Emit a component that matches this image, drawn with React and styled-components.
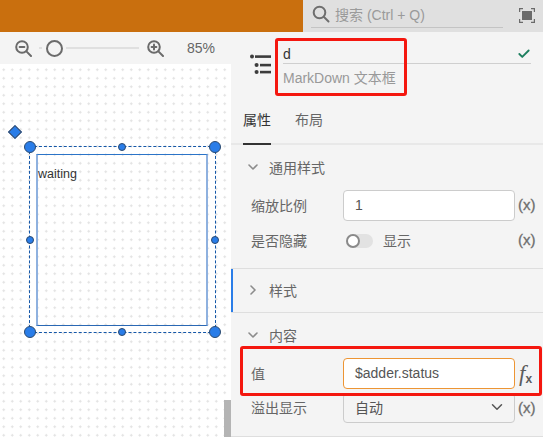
import React from 'react';
import styled, { createGlobalStyle } from 'styled-components';
import { Check, ChevronDown, ChevronRight } from 'lucide-react';

const GlobalStyle = createGlobalStyle`
  html, body {
    margin: 0;
    padding: 0;
    height: 100%;
    overflow: hidden;
    background: #f4f4f4;
    font-family: "Liberation Sans", "Noto Sans CJK SC", sans-serif;
  }
  * {
    box-sizing: border-box;
  }
`;

const Page = styled.div`
  position: relative;
  width: 543px;
  height: 437px;
  overflow: hidden;
  display: flex;
  flex-direction: column;
`;

const TopBar = styled.div`
  height: 32px;
  display: flex;
  flex: none;
`;

const Brand = styled.div`
  width: 303px;
  background: #c96f0e;
`;

const SearchArea = styled.div`
  flex: 1;
  background: #e0e0e0;
  display: flex;
  align-items: flex-start;
  padding-left: 8px;
`;

const SearchBox = styled.div`
  width: 192px;
  height: 28px;
  border-bottom: 1px solid #c4c4c4;
  display: flex;
  align-items: center;
  gap: 5px;
  padding-left: 1px;
  padding-top: 1px;
  color: #9a9a9a;
  font-size: 14px;
`;

const FullScreen = styled.svg`
  margin: 8px 0 0 16px;
`;

const Body = styled.div`
  flex: 1;
  display: flex;
  min-height: 0;
`;

const LeftPane = styled.div`
  width: 231px;
  display: flex;
  flex-direction: column;
`;

const ZoomBar = styled.div`
  height: 32px;
  flex: none;
  background: #f4f4f4;
  display: flex;
  align-items: center;
  padding-left: 15px;
`;

const TrackStart = styled.div`
  width: 3px;
  height: 2px;
  margin-left: 7px;
  background: #e0e0e0;
`;

const Knob = styled.div`
  width: 17px;
  height: 17px;
  margin-left: 4px;
  border-radius: 50%;
  border: 2px solid #6b6b6b;
  background: #f4f4f4;
`;

const Track = styled.div`
  width: 73px;
  height: 2px;
  margin: 0 8px 0 3px;
  background: #e0e0e0;
`;

const ZoomValue = styled.span`
  margin-left: 23px;
  font-size: 14px;
  color: #666;
`;

const Canvas = styled.div`
  position: relative;
  flex: 1;
  background-color: #fff;
  background-image: radial-gradient(circle at center, #e2e2e2 0, #e2e2e2 1px, transparent 1.3px);
  background-size: 8.5px 8.5px;
  background-position: -0.5px 1.5px;
`;

const Diamond = styled.div`
  position: absolute;
  left: 10px;
  top: 63px;
  width: 10px;
  height: 10px;
  transform: rotate(45deg);
  background: #2a7de8;
  border: 1px solid #3a4b63;
`;

const Selection = styled.div`
  position: absolute;
  left: 29px;
  top: 82px;
  width: 187px;
  height: 187px;
  border: 1px dashed #1457a8;
`;

const Node = styled.div`
  position: absolute;
  left: 36px;
  top: 90px;
  width: 172px;
  height: 172px;
  border-style: solid;
  border-color: #2b74c8 #8fb1df #2a68b4 #8fb1df;
  border-width: 1px 2px 1px 2px;
  padding: 7px 0 0 0;
  font-size: 12.5px;
  line-height: 24px;
  color: #333;
`;

const Handle = styled.div`
  position: absolute;
  left: ${p => p.$x - p.$r}px;
  top: ${p => p.$y - p.$r}px;
  width: ${p => p.$r * 2}px;
  height: ${p => p.$r * 2}px;
  border-radius: 50%;
  background: #2a7de8;
  border: 1px solid #2b4a70;
`;

const ScrollThumb = styled.div`
  position: absolute;
  right: 0;
  bottom: 0;
  width: 7px;
  height: 37px;
  background: #b4b4b4;
`;

const Panel = styled.div`
  flex: 1;
  background: #f4f4f4;
  display: flex;
  flex-direction: column;
  min-width: 0;
`;

const PanelHead = styled.div`
  height: 68px;
  flex: none;
  display: flex;
  padding: 20px 12px 0 19px;
`;

const TypeIcon = styled.svg`
  flex: none;
  margin-right: 11px;
`;

const HeadFields = styled.div`
  flex: 1;
  margin-top: -7px;
`;

const NameField = styled.div`
  height: 19px;
  border-bottom: 1px solid #cfcfcf;
  display: flex;
  align-items: center;
  justify-content: space-between;
  font-size: 14px;
  color: #333;
`;

const TypeName = styled.div`
  margin-top: 4px;
  font-size: 14px;
  line-height: 20px;
  color: #999;
`;

const Tabs = styled.div`
  height: 45px;
  flex: none;
  display: flex;
  gap: 24px;
  padding-left: 12px;
  border-bottom: 2px solid #e8e8e8;
`;

const Tab = styled.div`
  height: 45px;
  line-height: 41px;
  font-size: 14px;
  color: ${p => (p.$active ? '#333' : '#666')};
  border-bottom: 2px solid ${p => (p.$active ? '#333' : 'transparent')};
`;

const Section = styled.section`
  flex: none;
  padding-bottom: ${p => p.$pad}px;
  border-bottom: 1px solid #dedede;
  box-shadow: ${p => (p.$marked ? 'inset 2px 0 0 #2a7de8' : 'none')};
`;

const SectionHead = styled.div`
  height: ${p => (p.$open ? 45 : 43)}px;
  display: flex;
  align-items: center;
  gap: 8px;
  padding: 0 0 2px 14px;
  font-size: 14px;
  color: #666;
  svg {
    color: #8c8c8c;
  }
`;

const Rows = styled.div`
  display: flex;
  flex-direction: column;
  gap: 4px;
`;

const Row = styled.div`
  display: grid;
  grid-template-columns: 92px 172px auto;
  height: ${p => p.$h || 31}px;
  align-items: center;
  padding-left: 20px;
  font-size: 14px;
  color: #666;
`;

const Label = styled.span`
  padding-bottom: 2px;
`;

const Field = styled.div`
  height: 100%;
  display: flex;
  align-items: center;
  justify-content: space-between;
  padding: 0 8px 2px 11px;
  background: ${p => (p.$plain ? 'transparent' : '#fff')};
  border: 1px solid ${p => (p.$focus ? '#ed9534' : '#cccccc')};
  border-radius: 4px;
  color: #555;
`;

const Toggle = styled.div`
  display: flex;
  align-items: center;
  gap: 10px;
  padding-left: 3px;
`;

const SwitchTrack = styled.div`
  width: 27px;
  height: 14px;
  border-radius: 7px;
  background: #e2e2e2;
  display: flex;
  align-items: center;
`;

const SwitchThumb = styled.div`
  width: 14px;
  height: 14px;
  border-radius: 50%;
  background: #fff;
  border: 2px solid #8a8a8a;
`;

const Binding = styled.span`
  margin-left: 3px;
  padding-bottom: 2px;
  font-size: 15px;
  color: #6e6e6e;
  -webkit-text-stroke: 0.3px #6e6e6e;
`;

const FxMark = styled.span`
  margin-left: 4px;
  font-family: "Liberation Serif", serif;
  font-style: italic;
  font-size: 23px;
  line-height: 22px;
  color: #5c5c5c;
  sub {
    font-family: "Liberation Sans", sans-serif;
    font-style: normal;
    font-weight: 700;
    font-size: 12px;
    line-height: 0;
    vertical-align: -2px;
  }
`;

const RedBox = styled.div`
  position: absolute;
  left: ${p => p.$x}px;
  top: ${p => p.$y}px;
  width: ${p => p.$w}px;
  height: ${p => p.$h}px;
  border: 3px solid #f4170f;
  border-radius: 3px;
  pointer-events: none;
`;

const ZoomIcon = ({ plus }) => (
  <svg width="17" height="17" viewBox="0 0 17 17" fill="none" stroke="#6b6b6b" strokeWidth="2" strokeLinecap="round">
    <circle cx="7" cy="7" r="5.8" />
    <path d="M11.4 11.4 L16 16" />
    <path d="M4.6 7 H9.4" />
    {plus && <path d="M7 4.6 V9.4" />}
  </svg>
);

const handles = [
  [30, 82.5, 6], [122, 82.5, 4], [215, 82.5, 6],
  [30, 176, 4], [215, 176, 4],
  [30, 268, 6], [122, 268, 4], [215, 268, 6],
];

export default function App() {
  return (
    <Page>
      <GlobalStyle />
      <TopBar>
        <Brand />
        <SearchArea>
          <SearchBox>
            <svg width="18" height="18" viewBox="0 0 18 18" fill="none" stroke="#6e6e6e" strokeWidth="2" strokeLinecap="round">
              <circle cx="7.5" cy="7.5" r="5.8" />
              <path d="M12 12 L16.5 16.5" />
            </svg>
            <span>搜索 (Ctrl + Q)</span>
          </SearchBox>
          <FullScreen width="16" height="15" viewBox="0 0 16 15" fill="none" stroke="#6a6a6a" strokeWidth="1.2">
            <path d="M0.6 4 V0.6 H4 M12 0.6 H15.4 V4 M15.4 11 V14.4 H12 M4 14.4 H0.6 V11" />
            <rect x="3" y="3" width="10" height="9" fill="#6a6a6a" stroke="none" />
          </FullScreen>
        </SearchArea>
      </TopBar>
      <Body>
        <LeftPane>
          <ZoomBar>
            <ZoomIcon />
            <TrackStart />
            <Knob />
            <Track />
            <ZoomIcon plus />
            <ZoomValue>85%</ZoomValue>
          </ZoomBar>
          <Canvas>
            <Diamond />
            <Node>waiting</Node>
            <Selection />
            {handles.map(([x, y, r]) => (
              <Handle key={`${x}-${y}`} $x={x} $y={y} $r={r} />
            ))}
            <ScrollThumb />
          </Canvas>
        </LeftPane>
        <Panel>
          <PanelHead>
            <TypeIcon width="22" height="24" viewBox="0 0 22 24" fill="#3c3c3c">
              <circle cx="2" cy="4.5" r="2" />
              <rect x="5" y="3.3" width="16" height="2.6" />
              <circle cx="6.6" cy="13" r="2" />
              <rect x="10" y="11.8" width="11" height="2.6" />
              <circle cx="6.6" cy="20" r="2" />
              <rect x="10" y="18.8" width="11" height="2.6" />
            </TypeIcon>
            <HeadFields>
              <NameField>
                <span>d</span>
                <Check size={14} color="#1d7f5f" strokeWidth={3.2} />
              </NameField>
              <TypeName>MarkDown 文本框</TypeName>
            </HeadFields>
          </PanelHead>
          <Tabs>
            <Tab $active>属性</Tab>
            <Tab>布局</Tab>
          </Tabs>
          <Section $pad={12}>
            <SectionHead $open>
              <ChevronDown size={16} strokeWidth={2.4} />
              <span>通用样式</span>
            </SectionHead>
            <Rows>
              <Row>
                <Label>缩放比例</Label>
                <Field>1</Field>
                <Binding>(x)</Binding>
              </Row>
              <Row>
                <Label>是否隐藏</Label>
                <Toggle>
                  <SwitchTrack><SwitchThumb /></SwitchTrack>
                  <Label>显示</Label>
                </Toggle>
                <Binding>(x)</Binding>
              </Row>
            </Rows>
          </Section>
          <Section $marked $pad={0}>
            <SectionHead>
              <ChevronRight size={16} strokeWidth={2.4} />
              <span>样式</span>
            </SectionHead>
          </Section>
          <Section $pad={13}>
            <SectionHead $open>
              <ChevronDown size={16} strokeWidth={2.4} />
              <span>内容</span>
            </SectionHead>
            <Rows>
              <Row>
                <Label>值</Label>
                <Field $focus>$adder.status</Field>
                <FxMark>f<sub>x</sub></FxMark>
              </Row>
              <Row $h={30}>
                <Label>溢出显示</Label>
                <Field $plain>
                  <span>自动</span>
                  <ChevronDown size={18} color="#555" strokeWidth={2} />
                </Field>
                <Binding>(x)</Binding>
              </Row>
            </Rows>
          </Section>
        </Panel>
      </Body>
      <RedBox $x={275} $y={38} $w={132} $h={58} />
      <RedBox $x={240} $y={346} $w={302} $h={50} />
    </Page>
  );
}
